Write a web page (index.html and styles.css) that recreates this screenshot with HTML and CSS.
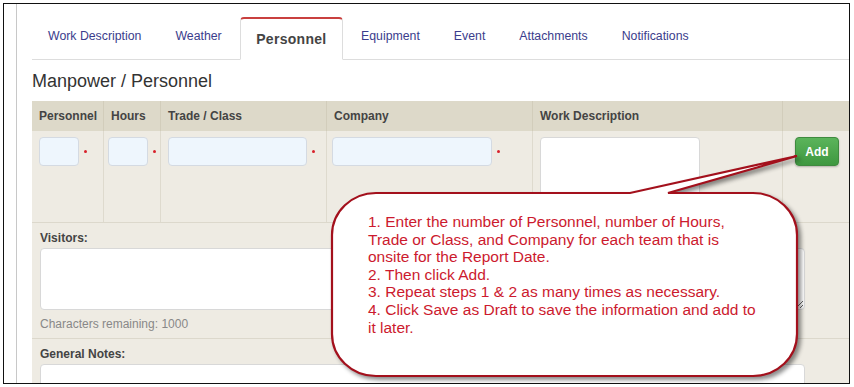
FILE: index.html
```html
<!DOCTYPE html>
<html lang="en">
<head>
    <meta charset="UTF-8">
    <title>Daily Report - Manpower / Personnel</title>
    <link rel="stylesheet" href="styles.css">
</head>
<body>
    <div class="frame">
        <div class="gutter"></div>
        <div class="main">
            <ul class="tabs">
                <li><a href="#">Work Description</a></li>
                <li><a href="#">Weather</a></li>
                <li class="active"><a href="#">Personnel</a></li>
                <li><a href="#">Equipment</a></li>
                <li><a href="#">Event</a></li>
                <li><a href="#">Attachments</a></li>
                <li><a href="#">Notifications</a></li>
            </ul>

            <h2 class="section-title">Manpower / Personnel</h2>

            <table class="crew">
                <thead>
                    <tr>
                        <th class="col-count">Personnel</th>
                        <th class="col-hours">Hours</th>
                        <th class="col-trade">Trade / Class</th>
                        <th class="col-company">Company</th>
                        <th class="col-desc">Work Description</th>
                        <th class="col-action"></th>
                    </tr>
                </thead>
                <tbody>
                    <tr>
                        <td><input type="text" class="field field-small"><span class="req"></span></td>
                        <td class="tight"><input type="text" class="field field-small"><span class="req"></span></td>
                        <td><input type="text" class="field field-trade"><span class="req"></span></td>
                        <td class="narrow"><input type="text" class="field field-company"><span class="req"></span></td>
                        <td><textarea class="field-desc"></textarea></td>
                        <td><button class="btn-add">Add</button></td>
                    </tr>
                </tbody>
            </table>

            <div class="notes">
                <label>Visitors:</label>
                <textarea class="notes-box"></textarea>
                <div class="counter">Characters remaining: 1000</div>
            </div>

            <div class="notes">
                <label>General Notes:</label>
                <textarea class="notes-box"></textarea>
            </div>
        </div>

        <!-- help callout pointing at the Add button -->
        <div class="callout">
            <svg class="callout-shape" width="845" height="379" viewBox="0 0 845 379">
                <path d="M372 189 L626 189 L793 152 L664 189 L749 189 A44 42 0 0 1 793 231 L793 330 A44 42 0 0 1 749 372 L372 372 A44 42 0 0 1 328 330 L328 231 A44 42 0 0 1 372 189 Z" />
            </svg>
            <div class="callout-text">
                1. Enter the number of Personnel, number of Hours,<br>
                Trade or Class, and Company for each team that is<br>
                onsite for the Report Date.<br>
                2. Then click Add.<br>
                3. Repeat steps 1 &amp; 2 as many times as necessary.<br>
                4. Click Save as Draft to save the information and add to<br>
                it later.
            </div>
        </div>
    </div>
</body>
</html>
```

FILE: styles.css
```css
body {
    margin: 0;
    font-family: "Liberation Sans", Arial, sans-serif;
    background: #fff;
}
.frame {
    position: relative;
    margin: 3px;
    width: 845px;
    height: 379px;
    border: 1px solid #111;
    display: flex;
    overflow: hidden;
}
.gutter {
    width: 12px;
    flex-shrink: 0;
    border-right: 1px solid #c8c8c8;
}
.main {
    flex: 1;
    min-width: 0;
    padding-left: 15px;
}
.tabs {
    list-style: none;
    margin: 13px 0 0;
    padding: 0;
    display: flex;
    border-bottom: 1px solid #ddd;
    height: 42px;
}
.tabs li {
    margin: 0 2px -1px 0;
}
.tabs a {
    display: block;
    height: 42px;
    box-sizing: border-box;
    padding: 11px 16px 0;
    line-height: 16px;
    font-size: 12.3px;
    color: #3b3d8c;
    text-decoration: none;
}
.tabs .active a {
    background: #fff;
    border: 1px solid #ddd;
    border-top: 2px solid #c9403f;
    border-bottom-color: #fff;
    border-radius: 4px 4px 0 0;
    padding: 12px 15.5px 0;
    height: 43px;
    font-size: 14px;
    font-weight: bold;
    letter-spacing: 0.3px;
    color: #444;
}
.section-title {
    margin: 11px 0 10px;
    font-size: 18px;
    line-height: 20px;
    font-weight: normal;
    color: #333;
}
.crew {
    border-collapse: collapse;
    width: 840px;
    table-layout: fixed;
}
.crew th {
    background: #ddd9c9;
    height: 30px;
    padding: 0 7px;
    text-align: left;
    font-size: 12px;
    color: #444;
    border-left: 1px solid #d2cdbb;
}
.crew td {
    background: #eeebe3;
    height: 91px;
    box-sizing: border-box;
    padding: 6px 7px 0;
    vertical-align: top;
    white-space: nowrap;
    border-left: 1px solid #dedace;
}
.crew td.tight {
    padding-left: 4px;
}
.crew td.narrow {
    padding-left: 5px;
}
.crew th:first-child,
.crew td:first-child {
    border-left: none;
}
.col-count { width: 57px; }
.col-hours { width: 42px; }
.col-trade { width: 151px; }
.col-company { width: 191px; }
.col-desc { width: 235px; }
.field {
    height: 29px;
    box-sizing: border-box;
    border: 1px solid #d4dae2;
    border-radius: 4px;
    background: #eef6fd;
    vertical-align: top;
}
.field-small { width: 40px; }
.field-trade { width: 139px; }
.field-company { width: 160px; }
.req {
    display: inline-block;
    width: 3px;
    height: 3px;
    margin: 13px 0 0 5px;
    background: #d8202a;
    border-radius: 50%;
    vertical-align: top;
}
.field-desc {
    width: 160px;
    height: 62px;
    box-sizing: border-box;
    border: 1px solid #d8d8d8;
    border-radius: 4px;
    background: #fff;
    resize: none;
}
.btn-add {
    margin-left: 5px;
    width: 44px;
    height: 29px;
    border: 1px solid #3f8a3f;
    border-radius: 4px;
    background: linear-gradient(#5bb45b, #3f9840);
    color: #fff;
    font-family: inherit;
    font-size: 12px;
    font-weight: bold;
    padding: 0;
    box-shadow: 0 1px 2px rgba(0, 0, 0, 0.25);
}
.notes {
    width: 840px;
    background: #eeebe3;
    border-top: 1px solid #dcd8cc;
    padding: 8px 8px 6px;
    box-sizing: border-box;
}
.notes label {
    display: block;
    font-size: 12px;
    font-weight: bold;
    color: #444;
    line-height: 15px;
}
.notes-box {
    display: block;
    margin-top: 2px;
    width: 765px;
    height: 62px;
    box-sizing: border-box;
    border: 1px solid #d8d8d8;
    border-radius: 4px;
    background: #fff;
}
.counter {
    margin-top: 7px;
    font-size: 12px;
    line-height: 15px;
    color: #888;
}
.callout {
    position: absolute;
    left: 0;
    top: 0;
    width: 100%;
    height: 100%;
    pointer-events: none;
}
.callout-shape {
    position: absolute;
    left: 0;
    top: 0;
    filter: drop-shadow(3px 3px 2px rgba(0, 0, 0, 0.45));
}
.callout-shape path {
    fill: #fff;
    stroke: #a3101c;
    stroke-width: 2.2;
}
.callout-text {
    position: absolute;
    left: 364px;
    top: 209px;
    font-size: 15.5px;
    line-height: 17.6px;
    color: #cc1a2e;
}
```
